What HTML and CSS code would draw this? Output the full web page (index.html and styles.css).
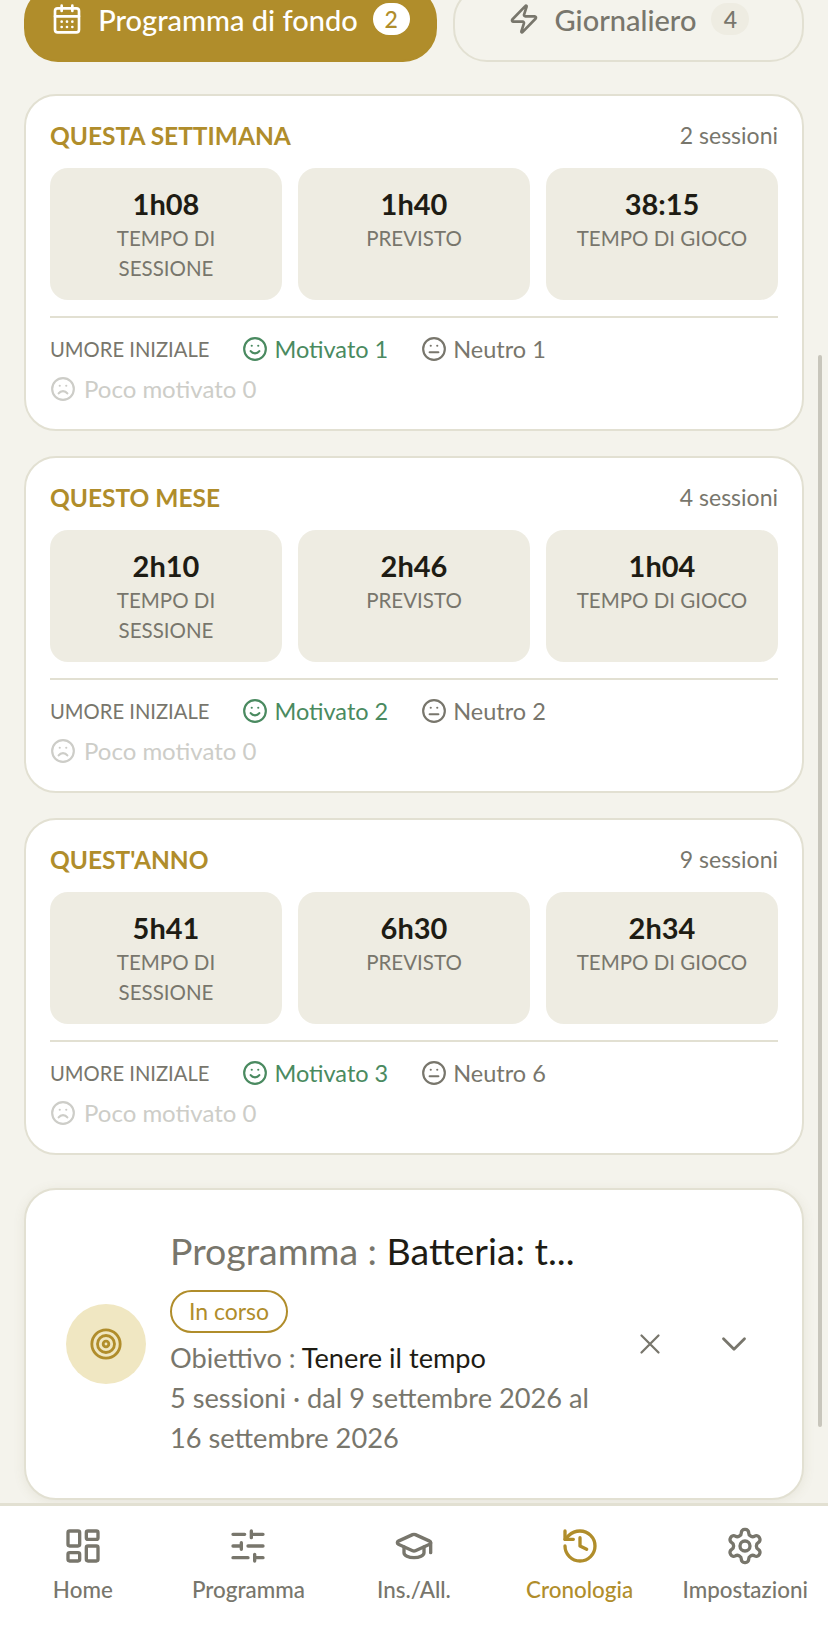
FILE: index.html
```html
<!DOCTYPE html>
<html lang="it">
<head>
<meta charset="utf-8">
<title>Cronologia</title>
<link rel="stylesheet" href="styles.css">
</head>
<body>
<svg class="defs" width="0" height="0">
  <symbol id="smile" viewBox="0 0 24 24"><circle cx="12" cy="12" r="10"/><path d="M8 14s1.5 2 4 2 4-2 4-2"/><path d="M9 9h.01"/><path d="M15 9h.01"/></symbol>
  <symbol id="meh" viewBox="0 0 24 24"><circle cx="12" cy="12" r="10"/><path d="M8 15h8"/><path d="M9 9h.01"/><path d="M15 9h.01"/></symbol>
  <symbol id="frown" viewBox="0 0 24 24"><circle cx="12" cy="12" r="10"/><path d="M16 16s-1.5-2-4-2-4 2-4 2"/><path d="M9 9h.01"/><path d="M15 9h.01"/></symbol>
</svg>
<div class="app">
  <main class="scroll">
    <div class="tabs">
      <div class="tab tab-on">
        <svg class="ico ico-32" viewBox="0 0 24 24"><path d="M8 2v4M16 2v4"/><rect x="3" y="4" width="18" height="18" rx="2"/><path d="M3 10h18M8 14h.01M12 14h.01M16 14h.01M8 18h.01M12 18h.01M16 18h.01"/></svg>
        <span>Programma di fondo</span><b class="count count-on">2</b>
      </div>
      <div class="tab">
        <svg class="ico ico-32" viewBox="0 0 24 24"><path d="M4 14a1 1 0 0 1-.78-1.63l9.9-10.2a.5.5 0 0 1 .86.46l-1.92 6.02A1 1 0 0 0 13 10h7a1 1 0 0 1 .78 1.63l-9.9 10.2a.5.5 0 0 1-.86-.46l1.92-6.02A1 1 0 0 0 11 14z"/></svg>
        <span>Giornaliero</span><b class="count">4</b>
      </div>
    </div>

    <section class="card">
      <header class="head"><h2>QUESTA SETTIMANA</h2><span>2 sessioni</span></header>
      <div class="stats">
        <div class="stat"><strong>1h08</strong><small>TEMPO DI SESSIONE</small></div>
        <div class="stat"><strong>1h40</strong><small>PREVISTO</small></div>
        <div class="stat"><strong>38:15</strong><small>TEMPO DI GIOCO</small></div>
      </div>
      <div class="moods">
        <span class="mood-label">UMORE INIZIALE</span>
        <span class="mood good"><svg class="ico"><use href="#smile"/></svg>Motivato 1</span>
        <span class="mood"><svg class="ico"><use href="#meh"/></svg>Neutro 1</span>
        <span class="mood low"><svg class="ico"><use href="#frown"/></svg>Poco motivato 0</span>
      </div>
    </section>

    <section class="card">
      <header class="head"><h2>QUESTO MESE</h2><span>4 sessioni</span></header>
      <div class="stats">
        <div class="stat"><strong>2h10</strong><small>TEMPO DI SESSIONE</small></div>
        <div class="stat"><strong>2h46</strong><small>PREVISTO</small></div>
        <div class="stat"><strong>1h04</strong><small>TEMPO DI GIOCO</small></div>
      </div>
      <div class="moods">
        <span class="mood-label">UMORE INIZIALE</span>
        <span class="mood good"><svg class="ico"><use href="#smile"/></svg>Motivato 2</span>
        <span class="mood"><svg class="ico"><use href="#meh"/></svg>Neutro 2</span>
        <span class="mood low"><svg class="ico"><use href="#frown"/></svg>Poco motivato 0</span>
      </div>
    </section>

    <section class="card">
      <header class="head"><h2>QUEST'ANNO</h2><span>9 sessioni</span></header>
      <div class="stats">
        <div class="stat"><strong>5h41</strong><small>TEMPO DI SESSIONE</small></div>
        <div class="stat"><strong>6h30</strong><small>PREVISTO</small></div>
        <div class="stat"><strong>2h34</strong><small>TEMPO DI GIOCO</small></div>
      </div>
      <div class="moods">
        <span class="mood-label">UMORE INIZIALE</span>
        <span class="mood good"><svg class="ico"><use href="#smile"/></svg>Motivato 3</span>
        <span class="mood"><svg class="ico"><use href="#meh"/></svg>Neutro 6</span>
        <span class="mood low"><svg class="ico"><use href="#frown"/></svg>Poco motivato 0</span>
      </div>
    </section>

    <section class="card program">
      <div class="badge">
        <svg class="target" viewBox="0 0 24 24"><circle cx="12" cy="12" r="10"/><circle cx="12" cy="12" r="6"/><circle cx="12" cy="12" r="2"/></svg>
      </div>
      <div class="info">
        <p class="title"><span>Programma : </span><em>Batteria: t...</em></p>
        <span class="pill">In corso</span>
        <p class="line"><span>Obiettivo : </span><em>Tenere il tempo</em></p>
        <p class="line">5 sessioni · dal 9 settembre 2026 al 16 settembre 2026</p>
      </div>
      <div class="actions">
        <svg class="ico act-x" viewBox="0 0 24 24"><path d="M18 6 6 18M6 6l12 12"/></svg>
        <svg class="ico act-down" viewBox="0 0 24 24"><path d="m6 9 6 6 6-6"/></svg>
      </div>
    </section>
    <div class="scrollbar"></div>
  </main>

  <nav class="nav">
    <div class="item">
      <svg class="ico" viewBox="0 0 24 24"><rect x="3" y="3" width="7" height="9" rx="1"/><rect x="14" y="3" width="7" height="5" rx="1"/><rect x="14" y="12" width="7" height="9" rx="1"/><rect x="3" y="16" width="7" height="5" rx="1"/></svg>
      <span>Home</span>
    </div>
    <div class="item">
      <svg class="ico" viewBox="0 0 24 24"><path d="M10 5H3M12 19H3M14 3v4M16 17v4M21 12h-9M21 19h-5M21 5h-7M8 10v4M8 12H3"/></svg>
      <span>Programma</span>
    </div>
    <div class="item">
      <svg class="ico" viewBox="0 0 24 24"><path d="M21.42 10.922a1 1 0 0 0-.019-1.838L12.83 5.18a2 2 0 0 0-1.66 0L2.6 9.08a1 1 0 0 0 0 1.832l8.57 3.908a2 2 0 0 0 1.66 0z"/><path d="M22 10v6"/><path d="M6 12.5V16a6 3 0 0 0 12 0v-3.5"/></svg>
      <span>Ins./All.</span>
    </div>
    <div class="item item-on">
      <svg class="ico" viewBox="0 0 24 24"><path d="M3 12a9 9 0 1 0 9-9 9.75 9.75 0 0 0-6.74 2.74L3 8"/><path d="M3 3v5h5"/><path d="M12 7v5l4 2"/></svg>
      <span>Cronologia</span>
    </div>
    <div class="item">
      <svg class="ico" viewBox="0 0 24 24"><path d="M12.22 2h-.44a2 2 0 0 0-2 2v.18a2 2 0 0 1-1 1.73l-.43.25a2 2 0 0 1-2 0l-.15-.08a2 2 0 0 0-2.73.73l-.22.38a2 2 0 0 0 .73 2.73l.15.1a2 2 0 0 1 1 1.72v.51a2 2 0 0 1-1 1.74l-.15.09a2 2 0 0 0-.73 2.73l.22.38a2 2 0 0 0 2.73.73l.15-.08a2 2 0 0 1 2 0l.43.25a2 2 0 0 1 1 1.73V20a2 2 0 0 0 2 2h.44a2 2 0 0 0 2-2v-.18a2 2 0 0 1 1-1.73l.43-.25a2 2 0 0 1 2 0l.15.08a2 2 0 0 0 2.73-.73l.22-.39a2 2 0 0 0-.73-2.73l-.15-.08a2 2 0 0 1-1-1.74v-.5a2 2 0 0 1 1-1.74l.15-.09a2 2 0 0 0 .73-2.73l-.22-.38a2 2 0 0 0-2.73-.73l-.15.08a2 2 0 0 1-2 0l-.43-.25a2 2 0 0 1-1-1.73V4a2 2 0 0 0-2-2z"/><circle cx="12" cy="12" r="3"/></svg>
      <span>Impostazioni</span>
    </div>
  </nav>
</div>
</body>
</html>
```
FILE: styles.css
```css
* { box-sizing: border-box; }
html, body { margin: 0; height: 100%; overflow: hidden; }
body { font-family: Lato, "Noto Sans", sans-serif; color: #78766c; background: #f4f3ec; }
p, h2 { margin: 0; }
em { font-style: normal; color: #1e1c14; }
.defs { position: absolute; }
.app { height: 1648px; display: flex; flex-direction: column; }
.scroll { position: relative; height: 1503px; flex: none; overflow: hidden; padding: 0 24px; display: flex; flex-direction: column; }
.ico { width: 26px; height: 26px; fill: none; stroke: currentColor; stroke-width: 2; stroke-linecap: round; stroke-linejoin: round; flex: none; }
.ico-32 { width: 32px; height: 32px; }

.tabs { display: grid; grid-template-columns: 413px 351px; gap: 16px; margin-top: -14px; flex: none; }
.tab { height: 76px; border-radius: 34px; border: 2px solid #e2e0d2; display: flex; align-items: center; justify-content: center; gap: 15px; font-size: 29px; font-weight: 500; padding-bottom: 10px; }
.tab-on { background: #b08d2b; border-color: #b08d2b; color: #fff; }
.count { min-width: 38px; height: 32px; border-radius: 16px; background: #eeece2; font-size: 23px; font-weight: 500; display: flex; align-items: center; justify-content: center; }
.count-on { background: #fff; color: #b08d2b; min-width: 37px; }

.card { background: #fff; border: 2px solid #e2e0d2; border-radius: 32px; padding: 24px; height: 337px; margin-top: 25px; flex: none; }
.tabs + .card { margin-top: 32px; }
.head { display: flex; justify-content: space-between; align-items: center; height: 30px; margin-bottom: 18px; font-size: 23px; }
.head h2 { font-size: 24.5px; font-weight: 700; color: #b08d2b; }
.stats { display: grid; grid-template-columns: repeat(3, 1fr); gap: 16px; padding-bottom: 16px; border-bottom: 2px solid #e2e0d2; }
.stat { height: 132px; background: #eeece2; border-radius: 18px; padding: 18px 20px 0; text-align: center; }
.stat strong { display: block; font-size: 29px; line-height: 36px; font-weight: 700; color: #1e1c14; }
.stat small { display: block; font-size: 20.5px; line-height: 30px; margin-top: 1px; }
.moods { display: flex; flex-wrap: wrap; align-items: center; column-gap: 33px; row-gap: 12px; padding-top: 17px; }
.mood-label { font-size: 20.2px; line-height: 28px; }
.mood { display: flex; align-items: center; gap: 6px; font-size: 23.5px; line-height: 28px; }
.good { color: #4a8a60; }
.low { color: #cdcdc8; width: 100%; font-size: 24px; gap: 8px; }

.program { height: 312px; margin-top: 33px; display: flex; align-items: center; padding: 0 40px; box-shadow: 0 2px 12px rgba(120, 110, 70, .1); }
.badge { width: 80px; height: 80px; border-radius: 50%; background: #f0e7c2; display: flex; align-items: center; justify-content: center; flex: none; }
.target { width: 34px; height: 34px; fill: none; stroke: #b08d2b; stroke-width: 2; }
.info { width: 430px; margin-left: 24px; padding-bottom: 3px; flex: none; }
.title { font-size: 37.5px; line-height: 46px; margin-bottom: 16px; }
.pill { display: inline-block; border: 2px solid #b08d2b; border-radius: 22px; color: #b08d2b; font-size: 23px; line-height: 39px; height: 43px; padding: 0 17px; vertical-align: top; }
.line { font-size: 27.2px; line-height: 40px; }
.pill + .line { margin-top: 5px; }
.actions { display: flex; align-items: center; gap: 46px; margin-left: 33px; }
.actions .ico { stroke-width: 1.6; }
.act-x { width: 34px; height: 34px; }
.act-down { width: 42px; height: 42px; }
.scrollbar { position: absolute; right: 6px; top: 355px; width: 4px; height: 1072px; border-radius: 2px; background: #c8c6bc; }

.nav { flex: 1; background: #fff; border-top: 3px solid #e2e0d2; display: grid; grid-template-columns: repeat(5, 1fr); padding: 20px 0 0 0; }
.item { display: flex; flex-direction: column; align-items: center; gap: 11px; font-size: 22.4px; font-weight: 500; line-height: 26px; }
.item .ico { width: 40px; height: 40px; }
.item-on { color: #b08d2b; }
```
